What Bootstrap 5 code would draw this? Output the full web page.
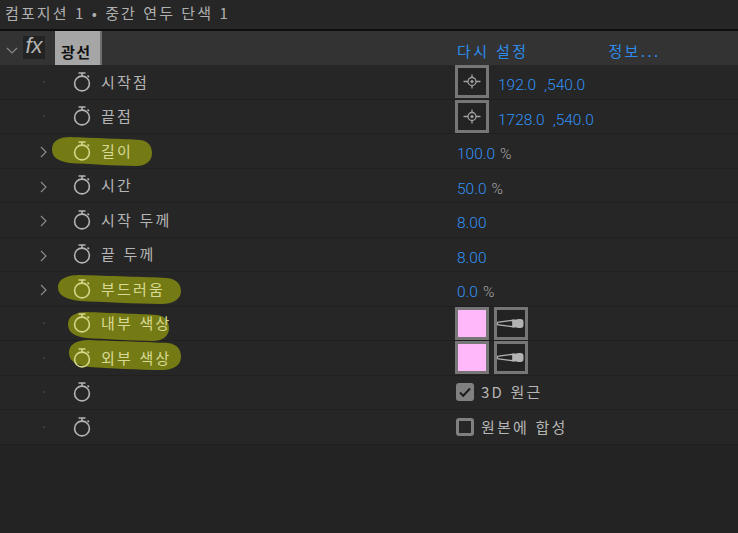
<!DOCTYPE html>
<html lang="ko">
<head>
    <title>효과 컨트롤</title>
    <meta name="viewport" content="width=device-width, initial-scale=1.0">
    <link href="https://cdn.jsdelivr.net/npm/bootstrap@5.3.2/dist/css/bootstrap.min.css" rel="stylesheet">
    <style>
        body {
            font-family: "Noto Sans CJK KR", "Noto Sans", sans-serif;
            background-color: #232323;
            color: #b5b5b5;
            font-size: 15px;
            overflow: hidden;
        }

        .title-bar {
            height: 31px;
            padding-left: 5px;
            padding-bottom: 3px;
            border-bottom: 2px solid #0e0e0e;
            background-color: #262626;
            letter-spacing: 2.1px;
            color: #b0b0b0;
        }

        .head-row {
            height: 34px;
            background-color: #333333;
        }

        .head-chevron {
            margin: 16px 4px 0 6px;
        }

        .fx-box {
            width: 22px;
            height: 23px;
            margin-top: 5px;
            background-color: #232323;
            color: #b5b5b5;
            font-family: "Liberation Sans", sans-serif;
            font-style: italic;
            font-size: 22px;
            line-height: 20px;
            text-align: center;
        }

        .name-box {
            width: 47px;
            height: 34px;
            margin-left: 10px;
            padding: 10px 0 0 6px;
            background-color: #a6a6a6;
            border-right: 2px solid #6f6f6f;
            color: #111;
            font-weight: 700;
            line-height: 22px;
            letter-spacing: 1.5px;
        }

        .head-links {
            padding-top: 9px;
        }

        .link-text {
            color: #2d8ceb;
            letter-spacing: 2.4px;
            white-space: nowrap;
        }

        .info-link {
            margin-left: 80px;
        }

        .left-side {
            width: 457px;
            flex: none;
        }

        .prop-row {
            height: 34.5px;
            background-color: #262626;
            border-bottom: 1px solid #202020;
            position: relative;
        }

        .twirl {
            width: 73px;
            flex: none;
            padding-left: 40px;
        }

        .dot-mark {
            display: block;
            width: 2px;
            height: 2px;
            margin-left: 3px;
            background-color: #3d3d3d;
        }

        .watch {
            width: 18px;
            height: 20px;
            flex: none;
            margin-right: 10px;
            position: relative;
            color: #b4b4b4;
        }

        .prop-label {
            position: relative;
            letter-spacing: 2.2px;
            white-space: nowrap;
        }

        .blob {
            position: absolute;
        }

        .blob-a { left: 52px; top: 3px; }
        .blob-b { left: 58px; top: 3px; }
        .blob-c { left: 68px; top: 5px; }
        .blob-d { left: 69px; top: -1px; }

        .is-marked .prop-label { color: #d8da96; }
        .is-marked .watch { color: #d4d78a; }

        .num {
            color: #3293f5;
            font-family: Roboto, "Liberation Sans", sans-serif;
            font-weight: 300;
            font-size: 15.5px;
            padding-top: 8px;
        }

        .num-first {
            margin-left: 9px;
        }

        .num-second {
            margin-left: 8px;
        }

        .unit {
            color: #a8a8a8;
            margin-left: 5px;
        }

        .tool-box {
            width: 34px;
            height: 33px;
            border: 3px solid #767676;
            background-color: #232323;
            flex: none;
            margin-left: -2px;
        }

        .tool-box.next-box {
            margin-left: 5px;
        }

        .pink-fill {
            background-color: #ffb9fb;
        }

        .check-box {
            width: 18px;
            height: 18px;
            border-radius: 3px;
            border: 3px solid #808080;
            background-color: #262626;
            margin-left: -1px;
            margin-right: 7px;
        }

        .check-box.is-on {
            background-color: #808080;
        }

        .check-text {
            letter-spacing: 2.2px;
        }
    </style>
</head>
<body>

<div class="title-bar d-flex align-items-center">컴포지션 1 • 중간 연두 단색 1</div>

<div class="head-row d-flex">
    <div class="left-side d-flex">
        <svg class="head-chevron" width="13" height="8" viewBox="0 0 13 8"><path d="M1 1l5 5 5-5" fill="none" stroke="#8a8a8a" stroke-width="1.1"/></svg>
        <div class="fx-box">fx</div>
        <div class="name-box">광선</div>
    </div>
    <div class="head-links d-flex">
        <span class="link-text">다시 설정</span>
        <span class="link-text info-link">정보...</span>
    </div>
</div>

<div id="rows"></div>

<script src="https://cdn.jsdelivr.net/npm/bootstrap@5.3.2/dist/js/bootstrap.bundle.min.js"></script>
<script>
const watchSvg = '<svg class="watch" viewBox="0 0 18 20"><g fill="none" stroke="currentColor" stroke-width="1.6"><circle cx="9" cy="11.5" r="7.4"/><path d="M5.5 1h7M9 1v3M14.5 3.5l1.5 1.5"/></g></svg>';
const crossSvg = '<svg width="28" height="27" viewBox="0 0 28 27"><g fill="none" stroke="#a0a0a0" stroke-width="1.3"><circle cx="14" cy="13.5" r="4"/><path d="M5.5 13.5h4.5M18 13.5h4.5M14 6.5v3M14 17.5v3"/></g><circle cx="14" cy="13.5" r="1.6" fill="#a0a0a0"/></svg>';
const dropperSvg = '<svg width="28" height="27" viewBox="0 0 28 27"><path d="M1.500 12.200L16 10.300v6.400L1.500 14.800a1.300 1.300 0 0 1 0-2.600z" fill="none" stroke="#b4b4b4" stroke-width="1.300"/><path d="M15.500 9.500h5V9h3a3 3 0 0 1 3 3v3a3 3 0 0 1-3 3h-3v-.5h-5z" fill="#b4b4b4"/></svg>';
const checkSvg = '<svg width="12" height="12" viewBox="0 0 12 12"><path d="M1 6.500l3.200 3.200L11 2.500" fill="none" stroke="#1d1d1d" stroke-width="2"/></svg>';
const twirlSvg = '<svg width="7" height="12" viewBox="0 0 7 12"><path d="M1 1l5 5-5 5" fill="none" stroke="#8f8f8f" stroke-width="1.1"/></svg>';

// marker strokes from the screenshot, stretched to each width
function blobSvg(cls, w, h) {
    return `<svg class="blob ${cls}" width="${w}" height="${h}" viewBox="0 0 100 30" preserveAspectRatio="none"><path d="M0 13C0 3 9 0 18 0C40 1 72 2 88 3C97 4 100 10 100 17C100 25 93 30 84 30C62 30 36 28 18 27C6 25 0 21 0 13Z" fill="#757b14"/></svg>`;
}

const props = [
    { label: '시작점', right: 'point', a: '192.0', b: ',540.0' },
    { label: '끝점', right: 'point', a: '1728.0', b: ',540.0' },
    { label: '길이', twirl: true, value: '100.0', unit: '%', blob: ['blob-a', 100, 29] },
    { label: '시간', twirl: true, value: '50.0', unit: '%' },
    { label: '시작 두께', twirl: true, value: '8.00' },
    { label: '끝 두께', twirl: true, value: '8.00' },
    { label: '부드러움', twirl: true, value: '0.0', unit: '%', blob: ['blob-b', 123, 29] },
    { label: '내부 색상', right: 'color', blob: ['blob-c', 101, 29] },
    { label: '외부 색상', right: 'color', blob: ['blob-d', 112, 30] },
    { label: '', right: 'check', on: true, text: '3D 원근' },
    { label: '', right: 'check', on: false, text: '원본에 합성' },
];

function rightHtml(p) {
    if (p.right === 'point') {
        return `<div class="tool-box d-flex align-items-center justify-content-center">${crossSvg}</div>
            <span class="num num-first">${p.a}</span><span class="num num-second">${p.b}</span>`;
    }
    if (p.right === 'color') {
        return `<div class="tool-box pink-fill"></div>
            <div class="tool-box next-box d-flex align-items-center justify-content-center">${dropperSvg}</div>`;
    }
    if (p.right === 'check') {
        return `<div class="check-box d-flex align-items-center justify-content-center ${p.on ? 'is-on' : ''}">${p.on ? checkSvg : ''}</div>
            <span class="check-text">${p.text}</span>`;
    }
    return `<span class="num">${p.value}</span>${p.unit ? `<span class="num unit">${p.unit}</span>` : ''}`;
}

document.getElementById('rows').innerHTML = props.map(p => `
    <div class="prop-row d-flex align-items-center ${p.blob ? 'is-marked' : ''}">
        ${p.blob ? blobSvg(...p.blob) : ''}
        <div class="left-side d-flex align-items-center">
            <div class="twirl">${p.twirl ? twirlSvg : '<span class="dot-mark"></span>'}</div>
            ${watchSvg}
            <span class="prop-label">${p.label}</span>
        </div>
        <div class="d-flex align-items-center">${rightHtml(p)}</div>
    </div>`).join('');
</script>
</body>
</html>
